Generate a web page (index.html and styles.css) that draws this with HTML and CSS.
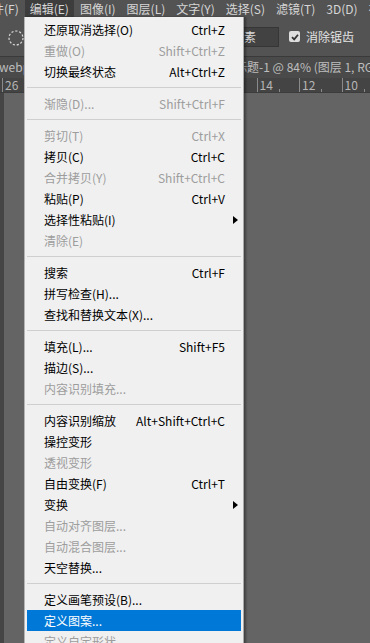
FILE: index.html
```html
<!DOCTYPE html>
<html lang="zh-CN">
<head>
    <meta charset="UTF-8">
    <meta name="viewport" content="width=device-width, initial-scale=1.0">
    <title>编辑菜单</title>
    <link rel="stylesheet" href="styles.css">
</head>
<body>
    <div class="app">
        <div class="menubar">
            <span class="mb-item first">文件(F)</span>
            <span class="mb-item open">编辑(E)</span>
            <span class="mb-item">图像(I)</span>
            <span class="mb-item">图层(L)</span>
            <span class="mb-item">文字(Y)</span>
            <span class="mb-item">选择(S)</span>
            <span class="mb-item">滤镜(T)</span>
            <span class="mb-item">3D(D)</span>
            <span class="mb-item">视图(V)</span>
        </div>

        <div class="options">
            <svg class="marquee" width="18" height="18" viewBox="0 0 18 18">
                <circle cx="9" cy="9" r="7" fill="none" stroke="#d8d8d8" stroke-width="1.2" stroke-dasharray="2.2 1.8"/>
            </svg>
            <div class="field">像素</div>
            <label class="check">
                <span class="box">
                    <svg width="10" height="10" viewBox="0 0 10 10"><path d="M2 5.2 L4.2 7.4 L8 2.8" fill="none" stroke="#333" stroke-width="1.8"/></svg>
                </span>
                消除锯齿
            </label>
        </div>

        <div class="tabs">
            <span class="tab">webp</span>
            <span class="tab active">未标题-1 @ 84% (图层 1, RGB/8)</span>
        </div>

        <div class="ruler">
            <span class="mark first">26</span>
            <span class="mark far">14</span>
            <span class="mark">12</span>
            <span class="mark">10</span>
        </div>

        <div class="workspace">
            <div class="vruler"></div>
            <div class="canvas"></div>
        </div>
    </div>

    <div class="menu">
        <div class="item"><span>还原取消选择(O)</span><span>Ctrl+Z</span></div>
        <div class="item off"><span>重做(O)</span><span>Shift+Ctrl+Z</span></div>
        <div class="item"><span>切换最终状态</span><span>Alt+Ctrl+Z</span></div>
        <div class="sep"></div>
        <div class="item off"><span>渐隐(D)...</span><span>Shift+Ctrl+F</span></div>
        <div class="sep"></div>
        <div class="item off"><span>剪切(T)</span><span>Ctrl+X</span></div>
        <div class="item"><span>拷贝(C)</span><span>Ctrl+C</span></div>
        <div class="item off"><span>合并拷贝(Y)</span><span>Shift+Ctrl+C</span></div>
        <div class="item"><span>粘贴(P)</span><span>Ctrl+V</span></div>
        <div class="item"><span>选择性粘贴(I)</span><span></span><i class="arrow"></i></div>
        <div class="item off"><span>清除(E)</span><span></span></div>
        <div class="sep"></div>
        <div class="item"><span>搜索</span><span>Ctrl+F</span></div>
        <div class="item"><span>拼写检查(H)...</span><span></span></div>
        <div class="item"><span>查找和替换文本(X)...</span><span></span></div>
        <div class="sep"></div>
        <div class="item"><span>填充(L)...</span><span>Shift+F5</span></div>
        <div class="item"><span>描边(S)...</span><span></span></div>
        <div class="item off"><span>内容识别填充...</span><span></span></div>
        <div class="sep"></div>
        <div class="item"><span>内容识别缩放</span><span>Alt+Shift+Ctrl+C</span></div>
        <div class="item"><span>操控变形</span><span></span></div>
        <div class="item off"><span>透视变形</span><span></span></div>
        <div class="item"><span>自由变换(F)</span><span>Ctrl+T</span></div>
        <div class="item"><span>变换</span><span></span><i class="arrow"></i></div>
        <div class="item off"><span>自动对齐图层...</span><span></span></div>
        <div class="item off"><span>自动混合图层...</span><span></span></div>
        <div class="item"><span>天空替换...</span><span></span></div>
        <div class="sep"></div>
        <div class="item"><span>定义画笔预设(B)...</span><span></span></div>
        <div class="item hot"><span>定义图案...</span><span></span></div>
        <div class="item off"><span>定义自定形状...</span><span></span></div>
    </div>
</body>
</html>
```

FILE: styles.css
```css
* { box-sizing: border-box; }
html, body { height: 100%; }
body { margin: 0; overflow: hidden; background: #646464; font-family: "Noto Sans CJK SC", "Noto Sans", sans-serif; font-size: 12px; }

.app { display: flex; flex-direction: column; height: 100%; }

.menubar { display: flex; gap: 1px; height: 17px; background: #535353; color: #d6d6d6; white-space: nowrap; overflow: hidden; }
.mb-item { padding: 0 5px; line-height: 17px; flex: none; }
.mb-item.first { margin-left: -25px; }
.mb-item.open { background: #3d3d3d; }

.options { display: flex; align-items: center; height: 40px; background: #535353; border-bottom: 1px solid #3a3a3a; color: #e0e0e0; white-space: nowrap; }
.marquee { margin-left: 7px; margin-top: 2px; flex: none; }
.field { margin-left: 206px; width: 48px; height: 20px; padding-left: 0; line-height: 18px; background: #424242; border: 1px solid #363636; color: #d8d8d8; font-size: 12px; flex: none; }
.check { display: flex; align-items: center; gap: 6px; margin-left: 10px; font-size: 12px; color: #e4e4e4; }
.box { display: flex; align-items: center; justify-content: center; width: 11px; height: 11px; background: #dedede; border-radius: 2px; }

.tabs { display: flex; height: 21px; background: #4a4a4a; color: #bdbdbd; font-size: 12px; white-space: nowrap; overflow: hidden; }
.tab { line-height: 20px; flex: none; }
.tab:first-child { margin-left: -1px; }
.tab.active { margin-left: 193px; }

.ruler { display: flex; height: 15px; background: #444; border-bottom: 1px solid #3c3c3c; color: #b5b5b5; font-size: 12px; overflow: hidden; white-space: nowrap; }
.mark { flex: none; width: 42.5px; padding-left: 2px; line-height: 14px; border-left: 1px solid #8a8a8a; position: relative; }
.mark.first { margin-left: 2px; }
.mark.far { margin-left: 212px; }
.mark::after { content: ""; position: absolute; left: 21px; bottom: 0; width: 1px; height: 3px; background: #8a8a8a; }

.workspace { flex: 1; display: flex; }
.vruler { width: 4px; background: #454545; }
.canvas { flex: 1; background: #646464; }

.menu { position: absolute; left: 24px; top: 17px; width: 220px; padding-top: 2px; background: #f0f0f0; border-left: 1px solid #b4b4b4; border-right: 1px solid #a9a9a9; box-shadow: 2px 0 2px rgba(0, 0, 0, 0.35); color: #000; font-size: 12px; }
.item { display: grid; grid-template-columns: 1fr auto 16px; align-items: center; height: 21px; margin: 0 2px; padding-left: 17px; white-space: nowrap; }
.item span:nth-child(2) { text-align: right; }
.item.off { color: #9d9d9d; }
.item.hot { background: #0078d7; color: #fff; }
.arrow { justify-self: start; margin-left: 8px; width: 0; height: 0; border-left: 5px solid #000; border-top: 4.5px solid transparent; border-bottom: 4.5px solid transparent; }
.sep { height: 11px; display: flex; align-items: center; margin: 0 2px; }
.sep::before { content: ""; flex: 1; height: 1px; background: #cfcfcf; }
```
